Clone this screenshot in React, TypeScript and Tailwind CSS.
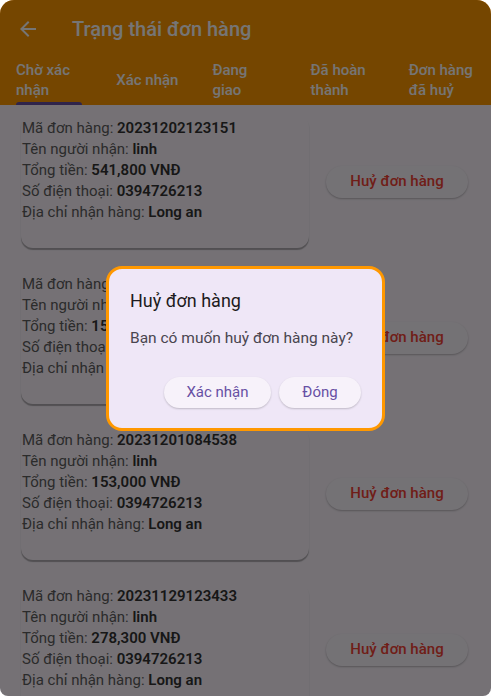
import React from "react";

const orders = [
  { id: "20231202123151", name: "linh", total: "541,800 VNĐ", phone: "0394726213", address: "Long an" },
  { id: "20231201084540", name: "linh", total: "153,000 VNĐ", phone: "0394726213", address: "Long an" },
  { id: "20231201084538", name: "linh", total: "153,000 VNĐ", phone: "0394726213", address: "Long an" },
  { id: "20231129123433", name: "linh", total: "278,300 VNĐ", phone: "0394726213", address: "Long an" },
];

const tabs = [
  { label: "Chờ xác nhận", pad: "pl-4" },
  { label: "Xác nhận", pad: "pl-[18px]" },
  { label: "Đang giao", pad: "pl-4" },
  { label: "Đã hoàn thành", pad: "pl-4" },
  { label: "Đơn hàng đã huỷ", pad: "pl-4" },
];

function Line({ label, value }: { label: string; value: string }) {
  return (
    <div className="leading-[21px] whitespace-nowrap">
      <span className="text-[#5e5e5e]">{label}: </span>
      <span className="font-semibold text-[#333]">{value}</span>
    </div>
  );
}

function OrderRow({ order }: { order: (typeof orders)[number] }) {
  return (
    <div className="flex items-center">
      <div className="ml-[21px] w-[288px] shrink-0 rounded-xl bg-[#fef7ff] pt-[3px] pb-[25px] pl-px text-[15px] shadow-[0_2px_1px_rgba(0,0,0,0.3)]">
        <Line label="Mã đơn hàng" value={order.id} />
        <Line label="Tên người nhận" value={order.name} />
        <Line label="Tổng tiền" value={order.total} />
        <Line label="Số điện thoại" value={order.phone} />
        <Line label="Địa chỉ nhận hàng" value={order.address} />
      </div>
      <button className="ml-[17px] h-8 w-[142px] shrink-0 rounded-full bg-[#fdf8ff] text-[15px] font-medium text-[#f44336] shadow-[0_1px_2px_rgba(0,0,0,0.25)]">
        Huỷ đơn hàng
      </button>
    </div>
  );
}

export default function App() {
  return (
    <div className="h-[696px] w-[494px] bg-white" style={{ fontFamily: "Roboto, 'Noto Sans', sans-serif" }}>
      <div className="relative h-[696px] w-[491px] overflow-hidden rounded-t-[14px] rounded-b-[8px] bg-[#fef7ff]">
        <div className="bg-[#ff9800] text-white">
          <div className="flex h-[57px] items-center">
            <svg viewBox="0 0 24 24" className="ml-4 h-6 w-6" fill="currentColor">
              <path d="M20 11H7.83l5.59-5.59L12 4l-8 8 8 8 1.41-1.41L7.83 13H20v-2z" />
            </svg>
            <div className="ml-8 text-[20px] font-medium">Trạng thái đơn hàng</div>
          </div>
          <div className="grid grid-cols-5">
            {tabs.map((t, i) => (
              <div key={t.label} className={`flex flex-col ${t.pad}`}>
                <div className="flex h-[45px] items-center">
                  <div className="w-[66px] text-[15px] font-medium leading-5">{t.label}</div>
                </div>
                <div className={`h-[3px] w-[66px] rounded-t-sm ${i === 0 ? "bg-[#6750a4]" : ""}`} />
              </div>
            ))}
          </div>
        </div>

        <div className="flex flex-col gap-[23px] pt-[10px]">
          {orders.map((o) => (
            <OrderRow key={o.id} order={o} />
          ))}
        </div>

        <div className="absolute inset-0 flex items-center justify-center bg-black/[0.54]">
          <div className="w-[279px] rounded-[16px] border-[3px] border-[#ff9800] bg-[#efe7f7] pt-[19px] pr-[21px] pb-5 pl-[21px]">
            <div className="text-[18px] leading-[26px] text-[#1d1b20]">Huỷ đơn hàng</div>
            <div className="mt-[13px] text-[15.5px] leading-[22px] text-[#49454f]">Bạn có muốn huỷ đơn hàng này?</div>
            <div className="mt-[28px] flex justify-end gap-2">
              <button className="h-[31px] w-[107px] rounded-full bg-[#f7f2fa] text-[15px] text-[#6750a4] shadow-[0_1px_2px_rgba(0,0,0,0.2)]">
                Xác nhận
              </button>
              <button className="h-[31px] w-[82px] rounded-full bg-[#f7f2fa] text-[15px] text-[#6750a4] shadow-[0_1px_2px_rgba(0,0,0,0.2)]">
                Đóng
              </button>
            </div>
          </div>
        </div>
      </div>
    </div>
  );
}
